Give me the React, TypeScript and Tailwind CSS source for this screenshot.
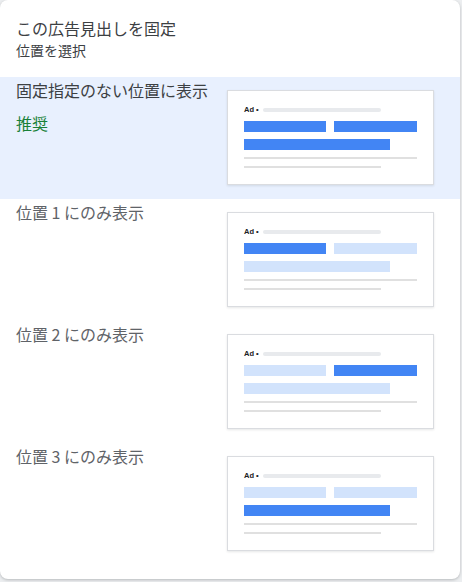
import React from 'react';

type Slot = 'on' | 'off';

const rows: { title: string; note?: string; bars: [Slot, Slot, Slot] }[] = [
  { title: '固定指定のない位置に表示', note: '推奨', bars: ['on', 'on', 'on'] },
  { title: '位置 1 にのみ表示', bars: ['on', 'off', 'off'] },
  { title: '位置 2 にのみ表示', bars: ['off', 'on', 'off'] },
  { title: '位置 3 にのみ表示', bars: ['off', 'off', 'on'] },
];

function bar(s: Slot) {
  return s === 'on' ? 'bg-[#4285f4]' : 'bg-[#d2e3fc]';
}

function AdPreview({ bars }: { bars: [Slot, Slot, Slot] }) {
  return (
    <div className="w-[207px] h-[95px] shrink-0 bg-white border border-[#dadce0] shadow-[0_1px_2px_rgba(60,64,67,0.12)] pl-[16px] pt-[15px]">
      <div className="flex items-center h-[8px]">
        <span className="text-[7.5px] leading-none font-bold text-[#202124] font-['Liberation_Sans',sans-serif]">Ad •</span>
        <div className="ml-[4px] w-[118px] h-[4px] rounded-full bg-[#e8eaed]" />
      </div>
      <div className="flex gap-[8px] mt-[7px]">
        <div className={`w-[82px] h-[11px] ${bar(bars[0])}`} />
        <div className={`w-[83px] h-[11px] ${bar(bars[1])}`} />
      </div>
      <div className={`mt-[7px] w-[146px] h-[11px] ${bar(bars[2])}`} />
      <div className="mt-[7px] w-[173px] h-[2px] bg-[#e0e0e0]" />
      <div className="mt-[7px] w-[137px] h-[2px] bg-[#e0e0e0]" />
    </div>
  );
}

export default function App() {
  return (
    <div className="w-[462px] h-[582px] bg-[#eceef0] font-['Noto_Sans_CJK_JP','Noto_Sans',sans-serif]">
      <div className="w-[460px] h-[579px] bg-white rounded-lg shadow-[0_1px_3px_rgba(60,64,67,0.3)] overflow-hidden">
        <div className="pl-[16px] pt-[16px] pb-[17px]">
          <div className="text-[16px] leading-[24px] text-[#3c4043]">この広告見出しを固定</div>
          <div className="text-[14px] leading-[20px] text-[#3c4043]">位置を選択</div>
        </div>

        {rows.map((r, i) => (
          <div
            key={r.title}
            className={`flex h-[122px] pt-[13px] ${i === 0 ? 'bg-[#e8f0fe]' : ''}`}
          >
            <div className="flex-1 pl-[16px] -mt-[12px]">
              <div className={`text-[16px] leading-[24px] ${i === 0 ? 'text-[#3c4043]' : 'text-[#5f6368]'}`}>
                {r.title}
              </div>
              {r.note && (
                <div className="mt-[9px] text-[16px] leading-[24px] text-[#188038]">{r.note}</div>
              )}
            </div>
            <div className="mr-[26px]">
              <AdPreview bars={r.bars} />
            </div>
          </div>
        ))}
      </div>
    </div>
  );
}
